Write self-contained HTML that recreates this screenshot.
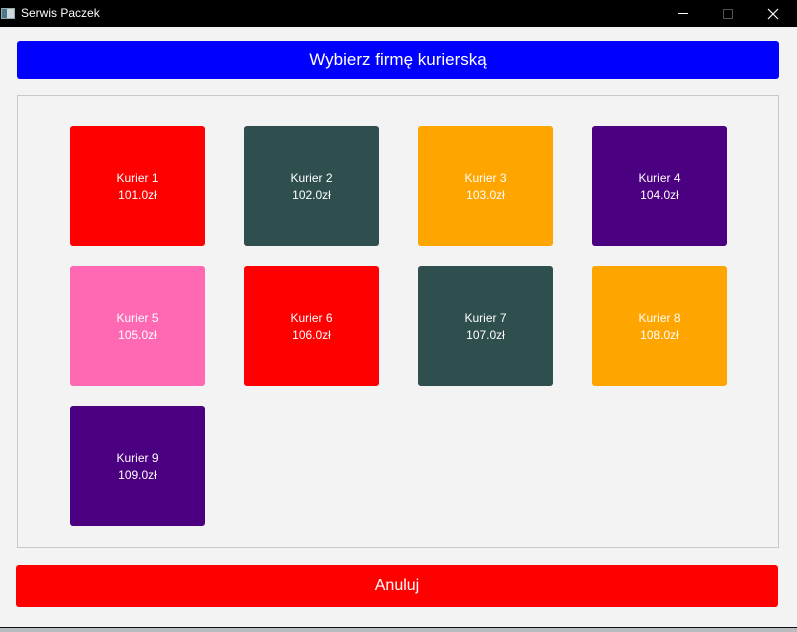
<!DOCTYPE html>
<html><head><style>
*{margin:0;padding:0;box-sizing:border-box}
body{width:797px;height:632px;background:#f3f3f3;position:relative;overflow:hidden;font-family:"Liberation Sans",sans-serif}
.tb{position:absolute;left:0;top:0;width:797px;height:27px;background:#000;color:#fff;font-size:12px}
.tile{position:absolute;width:135px;height:120px;border-radius:3px;color:#fff;font-size:12px;text-align:center;line-height:17px;padding-top:44px}
</style></head><body>
<div class="tb">
<div style="position:absolute;left:1px;top:8px;width:14px;height:11px;background:#cfd8dc;border:1px solid #9aa"><div style="width:5px;height:9px;background:#4a7a8a"></div></div>
<span style="position:absolute;left:21px;top:6px">Serwis Paczek</span>
<div style="position:absolute;left:678px;top:13px;width:10px;height:1px;background:#fff"></div>
<div style="position:absolute;left:723px;top:9px;width:10px;height:10px;border:1px solid #555"></div>
<svg style="position:absolute;left:767px;top:8px" width="12" height="12"><path d="M1 1L11 11M11 1L1 11" stroke="#fff" stroke-width="1.2"/></svg>
</div>
<div style="position:absolute;left:17px;top:41px;width:762px;height:38px;background:#00f;border-radius:3px;color:#fff;font-size:17px;text-align:center;line-height:38px">Wybierz firmę kurierską</div>
<div style="position:absolute;left:17px;top:95px;width:762px;height:453px;border:1px solid #c8c8c8"></div>
<div class="tile" style="left:70px;top:126px;background:#f00">Kurier 1<br>101.0zł</div>
<div class="tile" style="left:244px;top:126px;background:#2f4f4f">Kurier 2<br>102.0zł</div>
<div class="tile" style="left:418px;top:126px;background:#ffa500">Kurier 3<br>103.0zł</div>
<div class="tile" style="left:592px;top:126px;background:#4b0082">Kurier 4<br>104.0zł</div>
<div class="tile" style="left:70px;top:266px;background:#ff69b4">Kurier 5<br>105.0zł</div>
<div class="tile" style="left:244px;top:266px;background:#f00">Kurier 6<br>106.0zł</div>
<div class="tile" style="left:418px;top:266px;background:#2f4f4f">Kurier 7<br>107.0zł</div>
<div class="tile" style="left:592px;top:266px;background:#ffa500">Kurier 8<br>108.0zł</div>
<div class="tile" style="left:70px;top:406px;background:#4b0082">Kurier 9<br>109.0zł</div>
<div style="position:absolute;left:16px;top:565px;width:762px;height:42px;background:#f00;border-radius:3px;color:#fff;font-size:16px;text-align:center;line-height:42px">Anuluj</div>
<div style="position:absolute;left:0;top:627px;width:797px;height:1px;background:#111"></div>
<div style="position:absolute;left:0;top:628px;width:797px;height:4px;background:#b8bcbf"></div>
</body></html>
